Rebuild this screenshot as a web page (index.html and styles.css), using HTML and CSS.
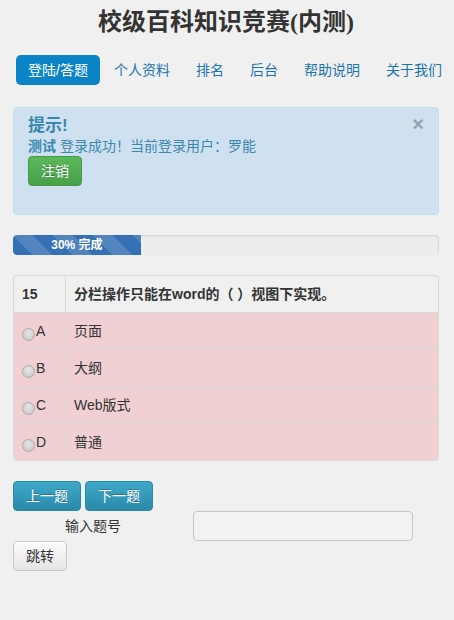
FILE: index.html
```html
<!DOCTYPE html>
<html lang="zh-CN">
<head>
<meta charset="utf-8">
<title>校级百科知识竞赛(内测)</title>
<link rel="stylesheet" href="styles.css">
</head>
<body>
<div class="page">
  <h1 class="title">校级百科知识竞赛(内测)</h1>
  <ul class="nav">
    <li class="active"><a href="#">登陆/答题</a></li>
    <li><a href="#">个人资料</a></li>
    <li><a href="#">排名</a></li>
    <li><a href="#">后台</a></li>
    <li><a href="#">帮助说明</a></li>
    <li><a href="#">关于我们</a></li>
  </ul>

  <div class="alert">
    <span class="close">×</span>
    <h4 class="alert-heading">提示!</h4>
    <div class="alert-line"><b>测试</b> 登录成功！当前登录用户：罗能</div>
    <a class="btn btn-success" href="#">注销</a>
  </div>

  <div class="progress">
    <div class="bar" style="width: 30%;">30% 完成</div>
  </div>

  <table class="qtable">
    <tr class="head">
      <th class="num">15</th>
      <th>分栏操作只能在word的（ ）视图下实现。</th>
    </tr>
    <tr class="opt">
      <td class="num"><span class="radio"></span>A</td>
      <td>页面</td>
    </tr>
    <tr class="opt">
      <td class="num"><span class="radio"></span>B</td>
      <td>大纲</td>
    </tr>
    <tr class="opt">
      <td class="num"><span class="radio"></span>C</td>
      <td>Web版式</td>
    </tr>
    <tr class="opt">
      <td class="num"><span class="radio"></span>D</td>
      <td>普通</td>
    </tr>
  </table>

  <div class="pager">
    <a class="btn btn-info" href="#">上一题</a>
    <a class="btn btn-info" href="#">下一题</a>
  </div>
  <div class="jump">
    <label class="jump-label">输入题号</label>
    <input class="jump-input" type="text">
  </div>
  <div class="jump-action">
    <a class="btn btn-default" href="#">跳转</a>
  </div>
</div>
</body>
</html>
```
FILE: styles.css
```css
html, body {
  margin: 0;
  padding: 0;
  background: #f0f0f0;
}
body {
  font-family: "Liberation Sans", Arial, "Noto Sans CJK SC", sans-serif;
  font-size: 14px;
  line-height: 20px;
  color: #333;
}
.page {
  padding: 0 15px 0 13px;
}
.title {
  margin: 0;
  font-family: "Liberation Serif", "Noto Sans CJK SC", serif;
  font-size: 24px;
  line-height: 44px;
  font-weight: bold;
  text-align: center;
  color: #333;
}
.nav {
  list-style: none;
  margin: 11px 0 22px 3px;
  padding: 0;
  display: flex;
  white-space: nowrap;
}
.nav li {
  flex: none;
  margin-right: 2px;
}
.nav a {
  display: block;
  padding: 8px 12px;
  line-height: 14px;
  border-radius: 5px;
  color: #1c74ad;
  text-decoration: none;
}
.nav .active a {
  background: #0a84c6;
  color: #fff;
}
.alert {
  position: relative;
  padding: 8px 35px 28px 14px;
  background: #cfe1f0;
  border: 1px solid #bfdfe9;
  border-radius: 4px;
  color: #3a87ad;
  margin-bottom: 20px;
}
.close {
  position: absolute;
  top: 6px;
  right: 14px;
  font-size: 20px;
  font-weight: bold;
  line-height: 20px;
  color: #98a4ad;
}
.alert-heading {
  margin: 0;
  font-size: 17px;
  line-height: 20px;
  font-weight: bold;
  color: #3a87ad;
}
.alert-line b {
  font-weight: bold;
}
.btn {
  display: inline-block;
  box-sizing: border-box;
  height: 30px;
  padding: 4px 12px;
  font-size: 14px;
  line-height: 20px;
  border-radius: 4px;
  text-decoration: none;
  text-align: center;
  border: 1px solid rgba(0,0,0,0.15);
}
.btn-success {
  color: #fff;
  background: linear-gradient(#5cb85c, #48a048);
  border-color: #449944;
  text-shadow: 0 -1px 0 rgba(0,0,0,0.25);
}
.btn-info {
  color: #fff;
  background: linear-gradient(#3fa9c9, #2a89a9);
  border-color: #2b88a6;
  text-shadow: 0 -1px 0 rgba(0,0,0,0.25);
}
.btn-default {
  color: #333;
  background: linear-gradient(#fdfdfd, #e4e4e4);
  border-color: #c8c8c8;
}
.progress {
  height: 20px;
  margin-bottom: 20px;
  border-radius: 4px;
  background: #ededed;
  box-shadow: inset 0 1px 2px rgba(0,0,0,0.12), inset -1px 0 0 #e2e2e2;
  overflow: hidden;
}
.bar {
  height: 20px;
  color: #fff;
  font-size: 12px;
  font-weight: bold;
  line-height: 20px;
  text-align: center;
  background-color: #3470b3;
  background-image: linear-gradient(45deg, rgba(255,255,255,0.15) 25%, transparent 25%, transparent 50%, rgba(255,255,255,0.15) 50%, rgba(255,255,255,0.15) 75%, transparent 75%, transparent);
  background-size: 40px 40px;
  border-radius: 4px 0 0 4px;
}
.qtable {
  width: 100%;
  border-collapse: separate;
  border-spacing: 0;
  border: 1px solid #d8d8d8;
  border-top: 0;
  border-radius: 4px;
  margin-bottom: 20px;
}
.qtable th,
.qtable td {
  padding: 8px;
  line-height: 20px;
  text-align: left;
  border-top: 1px solid #d6d6d6;
  vertical-align: top;
}
.qtable th {
  font-weight: bold;
}
.qtable .num {
  width: 35px;
  border-right: 1px solid #d8d8d8;
}
.qtable tr:first-child th:first-child { border-top-left-radius: 4px; }
.qtable tr:first-child th:last-child { border-top-right-radius: 4px; }
.qtable tr:last-child td:first-child { border-bottom-left-radius: 4px; }
.qtable tr:last-child td:last-child { border-bottom-right-radius: 4px; }
.head th {
  background: #f0f0f0;
}
.opt td {
  background: #f0d0d3;
}
.radio {
  display: inline-block;
  width: 11px;
  height: 11px;
  border-radius: 50%;
  border: 1px solid #a9a9a9;
  background: radial-gradient(circle at 50% 35%, #e6e6e6, #c4c4c4);
  vertical-align: -5px;
  margin-right: 1px;
}
.pager {
  display: flex;
  gap: 4px;
}
.pager .btn {
  width: 68px;
}
.jump {
  display: flex;
}
.jump-label {
  width: 160px;
  padding-top: 5px;
  text-align: center;
}
.jump-input {
  box-sizing: border-box;
  width: 220px;
  height: 30px;
  margin: 0 0 0 20px;
  padding: 4px 6px;
  border: 1px solid #c6c6c6;
  border-radius: 4px;
  background: #f2f2f2;
  font: inherit;
}
.jump-action .btn {
  width: 54px;
}
```
